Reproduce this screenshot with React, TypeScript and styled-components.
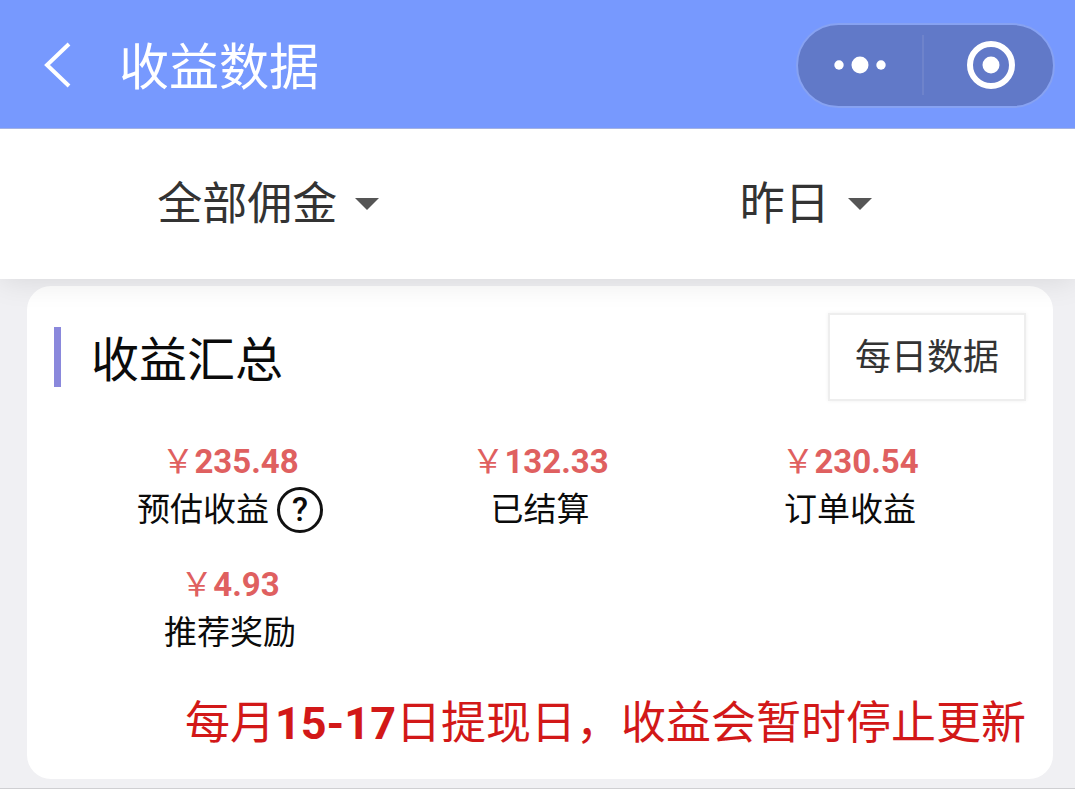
import React from "react";
import styled, { createGlobalStyle } from "styled-components";

const GlobalStyle = createGlobalStyle`
  *, *::before, *::after { box-sizing: border-box; }
  body {
    margin: 0;
    background: #f0f0f3;
    color: #0b0b0b;
    font-family: Roboto, "Noto Sans CJK SC", sans-serif;
  }
  button, select {
    margin: 0;
    padding: 0;
    border: 0;
    background: none;
    font: inherit;
    color: inherit;
    cursor: pointer;
  }
  h1, h2, p, dl, dd, dt { margin: 0; font-weight: 400; }
`;

const Header = styled.header`
  position: relative;
  z-index: 1;
  display: flex;
  align-items: center;
  height: 129px;
  padding: 2px 20px 0 36px;
  background: #7799fe;
  color: #fff;
  border-bottom: 1px solid #a3b2e4;
`;

const BackButton = styled.button`
  display: flex;
  width: 44px;
  height: 64px;
  align-items: center;
`;

const PageTitle = styled.h1`
  flex: 1;
  padding: 6px 0 0 39px;
  font-size: 50px;
  line-height: 60px;
`;

const Capsule = styled.div`
  display: flex;
  align-items: center;
  width: 259px;
  height: 85px;
  border: 2px solid #87a2f2;
  border-radius: 43px;
  background: #6179c8;
`;

const CapsuleButton = styled.button`
  display: flex;
  flex: 1;
  height: 100%;
  align-items: center;
  justify-content: center;

  &:last-child {
    padding-left: 6px;
  }
`;

const CapsuleDivider = styled.span`
  width: 2px;
  height: 60px;
  background: #6e83cb;
`;

const Filters = styled.nav`
  position: relative;
  display: grid;
  grid-template-columns: 1fr 1fr;
  height: 150px;
  background: #fff;
  box-shadow: 0 2px 28px rgba(0, 0, 0, 0.1);
`;

const Filter = styled.label`
  display: flex;
  align-items: center;
  justify-content: center;
  gap: 17px;
  color: #333;
`;

const FilterSelect = styled.select`
  appearance: none;
  field-sizing: content;
  padding-top: 2px;
  font-size: 45px;
  line-height: 64px;
  outline: 0;
`;

const Main = styled.main`
  padding: 7px 22px 9px 27px;
  border-bottom: 1px solid #cfcfd2;
`;

const Card = styled.section`
  padding: 27px 27px 22px;
  border-radius: 24px;
  background: #fff;
`;

const CardHeader = styled.div`
  display: flex;
  align-items: center;
  justify-content: space-between;
`;

const CardTitle = styled.h2`
  padding: 8px 0 0 30px;
  border-left: 7px solid #8a88dc;
  font-size: 48px;
  line-height: 52px;
`;

const DailyButton = styled.button`
  padding: 19px 25px 17px;
  border: 2px solid #eee;
  background: #fff;
  box-shadow: 0 0 4px rgba(0, 0, 0, 0.06);
  color: #333;
  font-size: 36px;
  line-height: 48px;
`;

const Stats = styled.dl`
  display: grid;
  grid-template-columns: repeat(3, 1fr);
  row-gap: 27px;
  padding: 37px 21px 0;
`;

const Stat = styled.div`
  display: flex;
  flex-direction: column-reverse;
  align-items: center;
  font-size: 33px;
  line-height: 48px;
`;

const StatLabel = styled.dt`
  display: flex;
  align-items: center;
  gap: 8px;
  height: 48px;
`;

const StatValue = styled.dd`
  color: #df6060;
  font-weight: 700;
`;

const Yen = styled.span`
  font-weight: 400;
`;

const HelpButton = styled.button`
  width: 46px;
  height: 46px;
  border: 3px solid #111;
  border-radius: 50%;
  font-size: 33px;
  font-weight: 500;
  line-height: 38px;
`;

const Notice = styled.p`
  padding-top: 34px;
  color: #d21818;
  font-size: 45px;
  line-height: 66px;
  text-align: right;
`;

const stats = [
  { label: "预估收益", value: "235.48", help: true },
  { label: "已结算", value: "132.33" },
  { label: "订单收益", value: "230.54" },
  { label: "推荐奖励", value: "4.93" },
];

function Caret() {
  return (
    <svg width="26" height="14" viewBox="0 0 26 14" aria-hidden="true">
      <path d="M1 1H25L13 13Z" fill="#555" />
    </svg>
  );
}

function FilterMenu({ name, option }: { name: string; option: string }) {
  return (
    <Filter>
      <FilterSelect aria-label={name}>
        <option>{option}</option>
      </FilterSelect>
      <Caret />
    </Filter>
  );
}

export default function App() {
  return (
    <>
      <GlobalStyle />
      <Header>
        <BackButton aria-label="返回">
          <svg width="44" height="52" viewBox="0 0 44 52" fill="none" stroke="#fff" strokeWidth="4">
            <path d="M33 5L11 26L33 47" />
          </svg>
        </BackButton>
        <PageTitle>收益数据</PageTitle>
        <Capsule>
          <CapsuleButton aria-label="更多">
            <svg width="52" height="18" viewBox="0 0 52 18" fill="#fff">
              <circle cx="5" cy="9" r="4.7" />
              <circle cx="26" cy="9" r="8.5" />
              <circle cx="47" cy="9" r="4.7" />
            </svg>
          </CapsuleButton>
          <CapsuleDivider />
          <CapsuleButton aria-label="关闭">
            <svg width="50" height="50" viewBox="0 0 50 50" fill="none">
              <circle cx="25" cy="25" r="21" stroke="#fff" strokeWidth="6" />
              <circle cx="25" cy="25" r="8.5" fill="#fff" />
            </svg>
          </CapsuleButton>
        </Capsule>
      </Header>
      <Filters>
        <FilterMenu name="佣金类型" option="全部佣金" />
        <FilterMenu name="日期" option="昨日" />
      </Filters>
      <Main>
        <Card>
          <CardHeader>
            <CardTitle>收益汇总</CardTitle>
            <DailyButton>每日数据</DailyButton>
          </CardHeader>
          <Stats>
            {stats.map((s) => (
              <Stat key={s.label}>
                <StatLabel>
                  {s.label}
                  {s.help && <HelpButton aria-label="说明">?</HelpButton>}
                </StatLabel>
                <StatValue>
                  <Yen>￥</Yen>
                  {s.value}
                </StatValue>
              </Stat>
            ))}
          </Stats>
          <Notice>
            每月<b>15-17</b>日提现日，收益会暂时停止更新
          </Notice>
        </Card>
      </Main>
    </>
  );
}
